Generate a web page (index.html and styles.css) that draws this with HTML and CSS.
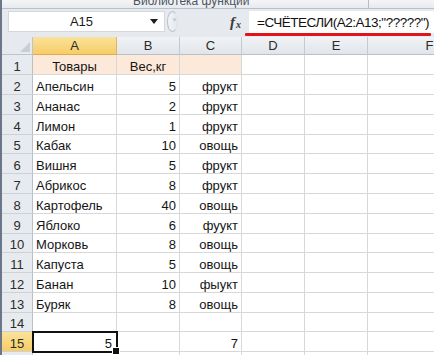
FILE: index.html
```html
<!DOCTYPE html>
<html>
<head>
<meta charset="utf-8">
<link rel="stylesheet" href="styles.css">
</head>
<body>
<div class="app">
  <div class="ribbon">
    <span class="ribbon-label">Библиотека функций</span>
    <span class="ribbon-sep"></span>
    <span></span>
  </div>
  <div class="fbar">
    <div class="namebox">
      <span class="name">A15</span>
      <svg class="arrow" width="8" height="5" viewBox="0 0 8 5"><polygon points="0,0 8,0 4,5" fill="#1e1e1e"/></svg>
    </div>
    <div class="grip"><span class="grip-dot"></span></div>
    <div class="fx"><span class="fx-f">f</span><span class="fx-x">x</span></div>
    <div class="formula">=СЧЁТЕСЛИ(A2:A13;"?????")</div>
    <div class="redline"></div>
  </div>
  <div class="sheet">
    <div class="grid">
      <div class="corner"><svg width="10" height="10" viewBox="0 0 10 10"><polygon points="10,0 10,10 0,10" fill="#c9ced6"/></svg></div>
      <div class="ch sel">A</div><div class="ch">B</div><div class="ch">C</div><div class="ch">D</div><div class="ch">E</div><div class="ch">F</div>

      <div class="rh">1</div><div class="c p ctr">Товары</div><div class="c p ctr">Вес,кг</div><div class="c p"></div><div class="c"></div><div class="c"></div><div class="c"></div>
      <div class="rh">2</div><div class="c">Апельсин</div><div class="c n">5</div><div class="c n">фрукт</div><div class="c"></div><div class="c"></div><div class="c"></div>
      <div class="rh">3</div><div class="c">Ананас</div><div class="c n">2</div><div class="c n">фрукт</div><div class="c"></div><div class="c"></div><div class="c"></div>
      <div class="rh">4</div><div class="c">Лимон</div><div class="c n">1</div><div class="c n">фрукт</div><div class="c"></div><div class="c"></div><div class="c"></div>
      <div class="rh">5</div><div class="c">Кабак</div><div class="c n">10</div><div class="c n">овощь</div><div class="c"></div><div class="c"></div><div class="c"></div>
      <div class="rh">6</div><div class="c">Вишня</div><div class="c n">5</div><div class="c n">фрукт</div><div class="c"></div><div class="c"></div><div class="c"></div>
      <div class="rh">7</div><div class="c">Абрикос</div><div class="c n">8</div><div class="c n">фрукт</div><div class="c"></div><div class="c"></div><div class="c"></div>
      <div class="rh">8</div><div class="c">Картофель</div><div class="c n">40</div><div class="c n">овощь</div><div class="c"></div><div class="c"></div><div class="c"></div>
      <div class="rh">9</div><div class="c">Яблоко</div><div class="c n">6</div><div class="c n">фуукт</div><div class="c"></div><div class="c"></div><div class="c"></div>
      <div class="rh">10</div><div class="c">Морковь</div><div class="c n">8</div><div class="c n">овощь</div><div class="c"></div><div class="c"></div><div class="c"></div>
      <div class="rh">11</div><div class="c">Капуста</div><div class="c n">5</div><div class="c n">овощь</div><div class="c"></div><div class="c"></div><div class="c"></div>
      <div class="rh">12</div><div class="c">Банан</div><div class="c n">10</div><div class="c n">фыукт</div><div class="c"></div><div class="c"></div><div class="c"></div>
      <div class="rh">13</div><div class="c">Буряк</div><div class="c n">8</div><div class="c n">овощь</div><div class="c"></div><div class="c"></div><div class="c"></div>
      <div class="rh">14</div><div class="c"></div><div class="c"></div><div class="c"></div><div class="c"></div><div class="c"></div><div class="c"></div>
      <div class="rh sel">15</div><div class="c n active">5</div><div class="c"></div><div class="c n">7</div><div class="c"></div><div class="c"></div><div class="c"></div>
      <div class="rh">16</div><div class="c"></div><div class="c"></div><div class="c"></div><div class="c"></div><div class="c"></div><div class="c"></div>
    </div>
  </div>
</div>
</body>
</html>
```

FILE: styles.css
```css
* { box-sizing: border-box; margin: 0; padding: 0; }
html, body { width: 434px; height: 355px; overflow: hidden; background: #fff; }
body { font-family: "Liberation Sans", Arial, sans-serif; color: #151515; }

.app {
  height: 355px;
  border-left: 2px solid #6b7789;
  display: flex;
  flex-direction: column;
}

/* ribbon strip */
.ribbon {
  height: 9px;
  flex: none;
  display: grid;
  grid-template-columns: 366px 1px 1fr;
  background: linear-gradient(#f4f5f7, #e7eaee);
  border-bottom: 1px solid #b9c0ca;
  overflow: hidden;
}
.ribbon-label {
  display: block;
  padding-left: 131px;
  margin-top: -5px;
  font-size: 12px;
  line-height: 12px;
  color: #4e5561;
  white-space: nowrap;
}
.ribbon-sep { background: #b5bcc6; }

/* formula bar */
.fbar {
  position: relative;
  height: 28px;
  flex: none;
  display: flex;
  align-items: flex-start;
  padding-top: 2px;
  background: #e6e9ee;
}
.namebox {
  margin-left: 6px;
  width: 157px;
  height: 21px;
  background: #fff;
  border: 1px solid #d3d8de;
  display: flex;
  align-items: center;
  padding-right: 6px;
}
.name {
  flex: 1;
  text-align: center;
  font-size: 13px;
  color: #1a1a1a;
  padding-left: 4px;
}
.arrow { flex: none; }
.grip {
  margin-left: 2px;
  width: 11px;
  height: 21px;
  border: 1px solid #b8c0ca;
  border-right-color: #dfe3e8;
  border-radius: 50%;
  background: linear-gradient(90deg, #f3f5f7, #e3e7ec);
  display: flex;
  justify-content: flex-end;
  padding-top: 6px;
  padding-right: 1px;
}
.grip-dot {
  width: 3px;
  height: 3px;
  border-radius: 50%;
  background: #c3c9d0;
}
.fx {
  width: 71px;
  height: 22px;
  display: flex;
  align-items: center;
  justify-content: flex-end;
  padding-right: 8px;
  font-family: "Liberation Serif", "Times New Roman", serif;
  font-style: italic;
  font-weight: bold;
  color: #3a3a3a;
}
.fx-f { font-size: 15px; }
.fx-x { font-size: 10px; margin-top: 5px; margin-left: 1px; }
.formula {
  flex: 1;
  height: 22px;
  background: #fff;
  padding-left: 8px;
  display: flex;
  align-items: center;
  font-size: 13.5px;
  letter-spacing: -0.5px;
  color: #111;
  white-space: nowrap;
}
.redline {
  position: absolute;
  left: 243px;
  top: 24px;
  width: 186px;
  height: 3px;
  background: #e1141c;
  border-radius: 1px;
}

/* sheet */
.sheet {
  flex: 1;
  overflow: hidden;
  background: #fff;
}
.grid {
  display: grid;
  width: max-content;
  grid-template-columns: 31px 84px 63px 62px 63px 63px 124px;
  grid-template-rows: 18px 20px 20px 20px 20px 19px 20px 20px 20px 20px 19px 20px 20px 20px 19px 20px 20px;
  font-size: 13px;
}
.corner {
  background: #e6e9ee;
  border-right: 1px solid #bcc4ce;
  border-bottom: 1px solid #bcc4ce;
  display: flex;
  align-items: flex-end;
  justify-content: flex-end;
  padding: 0 2px 2px 0;
}
.ch {
  background: linear-gradient(#f1f3f6, #e1e5ea);
  border-right: 1px solid #c4cad2;
  border-bottom: 1px solid #b7c0cb;
  display: flex;
  align-items: center;
  justify-content: center;
  color: #2b2b2b;
}
.ch.sel {
  background: linear-gradient(#fbe29a, #f6cd67);
  border-bottom-color: #e8a94a;
  border-right-color: #d9b66a;
}
.rh {
  background: #e7eaee;
  border-right: 1px solid #b7c0cb;
  border-bottom: 1px solid #cdd2d9;
  display: flex;
  align-items: flex-end;
  justify-content: center;
  line-height: 15px;
  color: #2b2b2b;
}
.rh.sel {
  background: linear-gradient(#fbe29a, #f6cd67);
  border-right-color: #e8a94a;
}
.c {
  border-right: 1px solid #d8d8d8;
  border-bottom: 1px solid #d8d8d8;
  display: flex;
  align-items: flex-end;
  line-height: 15px;
  padding: 0 3px;
  white-space: nowrap;
  overflow: visible;
}
.c.n { justify-content: flex-end; }
.c.ctr { justify-content: center; }
.c.p { background: #fde9d9; }
.c.active {
  position: relative;
  outline: 2px solid #111;
  outline-offset: -1px;
  z-index: 1;
  padding-right: 4px;
}
.c.active::after {
  content: "";
  position: absolute;
  right: -4px;
  bottom: -4px;
  width: 6px;
  height: 6px;
  background: #111;
  border: 1px solid #fff;
}
```
